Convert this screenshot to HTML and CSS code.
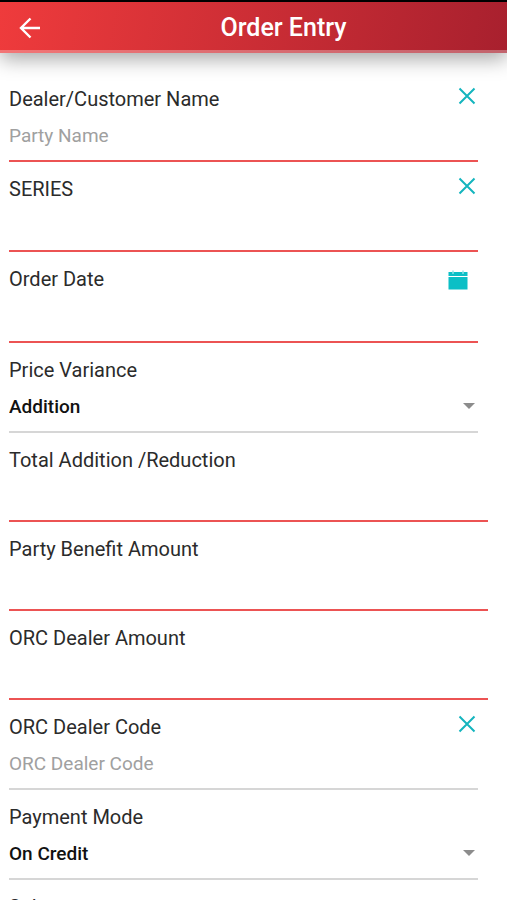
FILE: index.html
```html
<!DOCTYPE html>
<html lang="en">
<head>
    <meta charset="UTF-8">
    <meta name="viewport" content="width=device-width, initial-scale=1.0">
    <title>Order Entry</title>
    <link rel="stylesheet" href="styles.css">
</head>
<body>
    <header class="app-bar">
        <button class="icon-btn back" type="button" aria-label="Back">
            <svg width="22" height="22" viewBox="0 0 22 22"><path d="M21 11H3M11.5 1.5L2 11l9.5 9.5" fill="none" stroke="#fff" stroke-width="2.4"/></svg>
        </button>
        <h1>Order Entry</h1>
    </header>
    <form class="order-form">
        <div class="field">
            <label for="dealer">Dealer/Customer Name</label>
            <input type="text" id="dealer" placeholder="Party Name">
            <button class="icon-btn clear" type="button" aria-label="Clear dealer">
                <svg width="18" height="18" viewBox="0 0 18 18"><path d="M1.5 1.5l15 15M16.5 1.5l-15 15"/></svg>
            </button>
        </div>
        <div class="field">
            <label for="series">SERIES</label>
            <input type="text" id="series">
            <button class="icon-btn clear" type="button" aria-label="Clear series">
                <svg width="18" height="18" viewBox="0 0 18 18"><path d="M1.5 1.5l15 15M16.5 1.5l-15 15"/></svg>
            </button>
        </div>
        <div class="field date">
            <label for="order-date">Order Date</label>
            <input type="text" id="order-date">
            <button class="icon-btn calendar" type="button" aria-label="Pick a date">
                <svg width="20" height="20" viewBox="0 0 20 20">
                    <path d="M0.5 2H19.5V6H0.5zM0.5 7h19v12.5h-19z" fill="#0bbfc6"/>
                    <path d="M5 0.5v3.5M15 0.5v3.5" stroke="#8fe3e6" stroke-width="1.5"/>
                </svg>
            </button>
        </div>
        <div class="field muted">
            <label for="variance">Price Variance</label>
            <select id="variance">
                <option>Addition</option>
                <option>Reduction</option>
            </select>
            <svg class="caret" width="12" height="6" viewBox="0 0 12 6"><path d="M0 0h12L6 6z" fill="#8c8c8c"/></svg>
        </div>
        <div class="field amount">
            <label for="total">Total Addition /Reduction</label>
            <input type="text" id="total" inputmode="decimal">
        </div>
        <div class="field amount">
            <label for="benefit">Party Benefit Amount</label>
            <input type="text" id="benefit" inputmode="decimal">
        </div>
        <div class="field amount">
            <label for="orc-amount">ORC Dealer Amount</label>
            <input type="text" id="orc-amount" inputmode="decimal">
        </div>
        <div class="field muted">
            <label for="orc-code">ORC Dealer Code</label>
            <input type="text" id="orc-code" placeholder="ORC Dealer Code">
            <button class="icon-btn clear" type="button" aria-label="Clear dealer code">
                <svg width="18" height="18" viewBox="0 0 18 18"><path d="M1.5 1.5l15 15M16.5 1.5l-15 15"/></svg>
            </button>
        </div>
        <div class="field muted">
            <label for="payment">Payment Mode</label>
            <select id="payment">
                <option>On Credit</option>
                <option>Cash</option>
            </select>
            <svg class="caret" width="12" height="6" viewBox="0 0 12 6"><path d="M0 0h12L6 6z" fill="#8c8c8c"/></svg>
        </div>
        <div class="field">
            <label for="sales">Sales</label>
            <input type="text" id="sales">
        </div>
    </form>
</body>
</html>
```
FILE: styles.css
```css
* {
    box-sizing: border-box;
}
body {
    margin: 0;
    height: 100vh;
    display: flex;
    flex-direction: column;
    font-family: Roboto, "Liberation Sans", sans-serif;
    background: #fff;
    color: #2b2b2b;
}
.app-bar {
    display: grid;
    grid-template-columns: 60px 1fr;
    align-items: center;
    flex: none;
    height: 53px;
    padding-top: 3px;
    border-top: 2px solid #000;
    border-bottom: 3px solid rgba(255, 255, 255, 0.3);
    background: linear-gradient(100deg, #ef3b3c, #a8202e) border-box;
    box-shadow: 0 6px 20px rgba(0, 0, 0, 0.35);
    z-index: 1;
}
.app-bar h1 {
    margin: 0;
    text-align: center;
    font-size: 25px;
    font-weight: 500;
    line-height: 30px;
    color: #fff;
}
.icon-btn {
    display: flex;
    padding: 0;
    border: none;
    background: none;
    cursor: pointer;
}
.back {
    justify-self: center;
}
.order-form {
    flex: 1;
    overflow-y: auto;
    scrollbar-width: none;
    padding: 19px 29px 19px 9px;
}
.field {
    position: relative;
    height: 90px;
    padding-top: 15px;
    border-bottom: 2px solid #ec5353;
}
.field.date {
    height: 91px;
}
.field.amount {
    height: 89px;
    margin-right: -10px;
}
.field.muted {
    border-bottom-color: #d6d6d6;
}
.field label {
    display: block;
    font-size: 20px;
    line-height: 24px;
}
.field input,
.field select {
    display: block;
    width: 100%;
    height: 28px;
    margin-top: 10px;
    padding: 0;
    border: none;
    outline: none;
    background: none;
    font-family: inherit;
    font-size: 19px;
    color: #111;
    appearance: none;
}
.field select {
    font-weight: 500;
}
.field input::placeholder {
    color: #a0a0a0;
    opacity: 1;
}
.clear {
    position: absolute;
    top: 15px;
    right: 2px;
}
.clear path {
    fill: none;
    stroke: #14b5be;
    stroke-width: 2;
}
.calendar {
    position: absolute;
    top: 18px;
    right: 10px;
}
.caret {
    position: absolute;
    top: 60px;
    right: 3px;
    pointer-events: none;
}
```
